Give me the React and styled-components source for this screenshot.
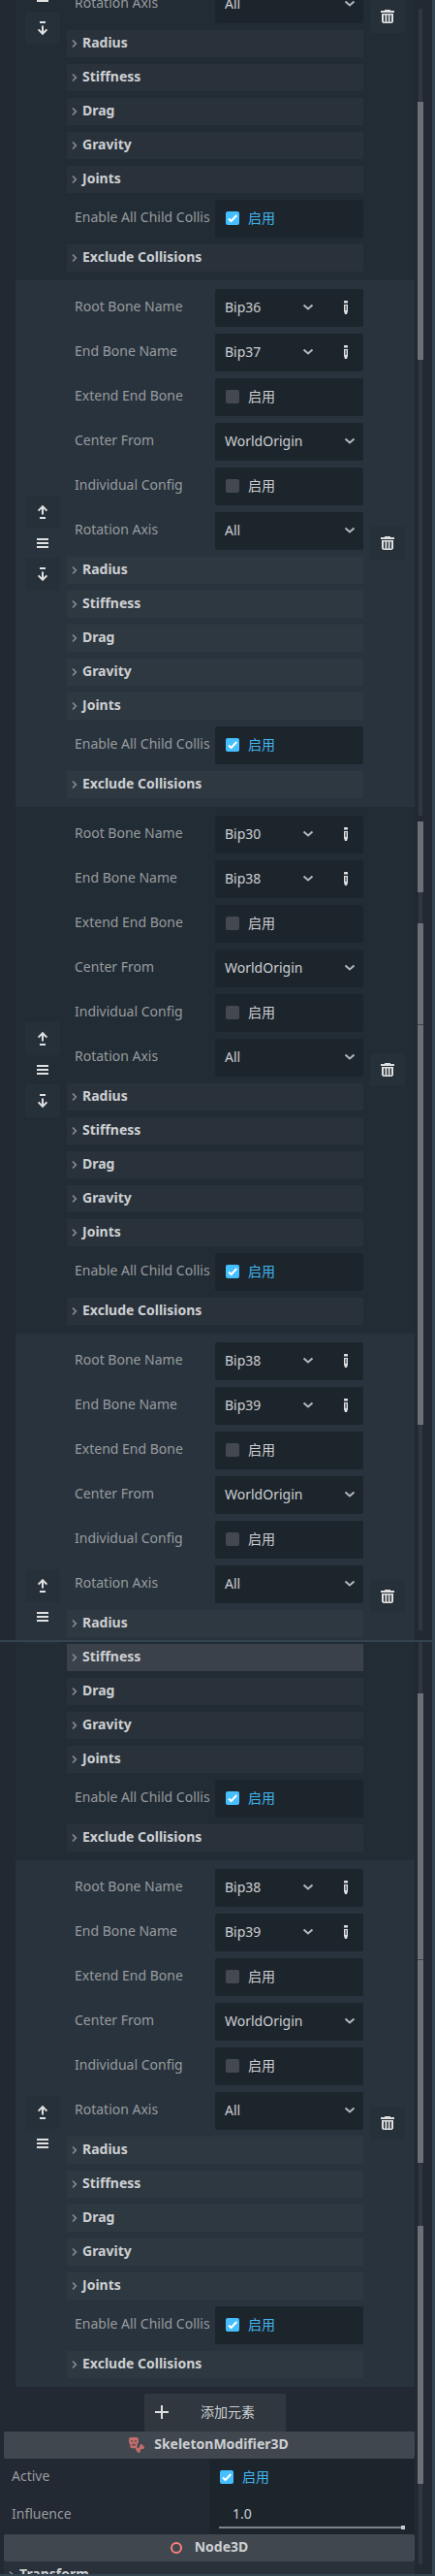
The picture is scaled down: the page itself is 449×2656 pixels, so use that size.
import React from "react"
import styled, { createGlobalStyle } from "styled-components"

const UPPER_SCROLL = [
   ["gap", 9],
   ["track", 96],
   ["thumb", 266],
   ["track", 470],
   ["gap", 6],
   ["thumb", 73],
   ["track", 32],
   ["thumb", 104],
   ["notch", 1],
   ["thumb", 412],
   ["track", 212],
]

const LOWER_SCROLL = [
   ["track", 53],
   ["thumb", 274],
   ["notch", 1],
   ["thumb", 209],
   ["track", 65],
   ["thumb", 266],
   ["track", 83],
]

const ChevronDown = () => (
   <svg width="12" height="8" viewBox="0 0 12 8" fill="none">
      <path d="M1.5 1.5L6 5.5L10.5 1.5" stroke="#b4b7ba" strokeWidth="2" />
   </svg>
)

const ChevronRight = () => (
   <svg width="6" height="10" viewBox="0 0 6 10" fill="none">
      <path d="M1 1.5L4.3 5L1 8.5" stroke="#84898f" strokeWidth="1.8" />
   </svg>
)

const PencilIcon = () => (
   <svg width="4" height="14" viewBox="0 0 4 14">
      <path
         fill="#e0e0e0"
         fillRule="evenodd"
         d="M0.6 0h2.8l0.6 0.6V2.6H0V0.6zM0 4h4v7L3 14H1L0 11zM1.5 5v5h1V5z"
      />
   </svg>
)

const MoveUpIcon = () => (
   <svg width="12" height="16" viewBox="0 0 12 16" fill="none">
      <path d="M6 10.6V2.2M1.6 6.6L6 2.2L10.4 6.6" stroke="#e0e0e0" strokeWidth="2" />
      <path d="M3 14H9" stroke="#e0e0e0" strokeWidth="2" />
   </svg>
)

const MoveDownIcon = () => (
   <svg width="12" height="16" viewBox="0 0 12 16" fill="none">
      <path d="M6 5.4V13.8M1.6 9.4L6 13.8L10.4 9.4" stroke="#e0e0e0" strokeWidth="2" />
      <path d="M3 2H9" stroke="#e0e0e0" strokeWidth="2" />
   </svg>
)

const HandleIcon = () => (
   <svg width="12" height="10" viewBox="0 0 12 10">
      <path d="M0 0h12v2H0zM0 4h12v2H0zM0 8h12v2H0z" fill="#e0e0e0" />
   </svg>
)

const TrashIcon = () => (
   <svg width="14" height="14" viewBox="0 0 14 14">
      <path
         fill="#e0e0e0"
         fillRule="evenodd"
         d="M4 0h6v1h4v2H0V1h4zM1 4h12v8.5L11.5 14h-9L1 12.5zM3 5.5v7h1.5v-7zM6.3 5.5v7h1.5v-7zM9.5 5.5v7H11v-7z"
      />
   </svg>
)

const PlusIcon = () => (
   <svg width="14" height="14" viewBox="0 0 14 14">
      <path d="M6 0h2v6h6v2H8v6H6V8H0V6h6z" fill="#e0e0e0" />
   </svg>
)

const SkeletonIcon = () => (
   <svg width="16" height="16" viewBox="0 0 16 16" fill="#c46c6e">
      <path
         fillRule="evenodd"
         d="M2.2 0h5.6Q10 0 10 2.2v2.600Q10 6.500 8.700 7v2.300q0 1.900-1.900 1.900H3.200q-1.900 0-1.900-1.900V7Q0 6.500 0 4.800V2.200Q0 0 2.200 0zM2.200 3v1.600h1.600V3zM6.200 3v1.600h1.600V3zM4.600 5.200v0.900h0.900v-0.900zM3 7.300v1.200h4V7.300z"
      />
      <path d="M9.200 13.400L14 9.400" stroke="#c46c6e" strokeWidth="2.8" />
      <circle cx="8.700" cy="12.300" r="1.700" />
      <circle cx="10.200" cy="14.200" r="1.700" />
      <circle cx="12.900" cy="8.700" r="1.700" />
      <circle cx="14.300" cy="10.500" r="1.700" />
   </svg>
)

const NodeIcon = () => (
   <svg width="12" height="12" viewBox="0 0 12 12">
      <circle cx="6" cy="6" r="5" fill="none" stroke="#fc7f7f" strokeWidth="2" />
   </svg>
)

const CheckField = ({ checked, flush }) => (
   <Field $flush={flush}>
      <CheckBox $checked={checked}>
         {checked && (
            <svg width="14" height="14" viewBox="0 0 14 14" fill="none">
               <path d="M3 7.5L5.6 10L11.3 4" stroke="#fff" strokeWidth="2" />
            </svg>
         )}
      </CheckBox>
      <CheckText $checked={checked}>启用</CheckText>
   </Field>
)

const BoneField = ({ value }) => (
   <Field>
      <span>{value}</span>
      <BoneActions>
         <ChevronDown />
         <PencilIcon />
      </BoneActions>
   </Field>
)

const SelectField = ({ value }) => (
   <Field>
      <span>{value}</span>
      <ChevronDown />
   </Field>
)

const FIELDS = {
   bone: BoneField,
   check: CheckField,
   select: SelectField,
}

const getItems = (root, end) => [
   { label: "Root Bone Name", type: "bone", value: root },
   { label: "End Bone Name", type: "bone", value: end },
   { label: "Extend End Bone", type: "check" },
   { label: "Center From", type: "select", value: "WorldOrigin" },
   { label: "Individual Config", type: "check" },
   { label: "Rotation Axis", type: "select", value: "All" },
   { label: "Radius", type: "group" },
   { label: "Stiffness", type: "group" },
   { label: "Drag", type: "group" },
   { label: "Gravity", type: "group" },
   { label: "Joints", type: "group" },
   { label: "Enable All Child Collis", type: "check", checked: true },
   { label: "Exclude Collisions", type: "group" },
]

const Item = ({ item, light, hovered }) => {
   if (item.type === "group") {
      return (
         <GroupBar $light={light} $hovered={hovered}>
            <ChevronRight />
            <span>{item.label}</span>
         </GroupBar>
      )
   }

   const ItemField = FIELDS[item.type]
   return (
      <PropertyRow>
         <Label>{item.label}</Label>
         <ItemField value={item.value} checked={item.checked} />
      </PropertyRow>
   )
}

// from / to limit the list to the items that are scrolled into view
const Joint = ({
   root,
   end,
   light,
   last,
   offset = 0,
   controlsShift = 0,
   hovered,
   from = 0,
   to,
}) => (
   <JointPanel $light={light} $offset={offset}>
      <Controls $shift={controlsShift}>
         <ToolButton>
            <MoveUpIcon />
         </ToolButton>
         <Handle>
            <HandleIcon />
         </Handle>
         {!last && (
            <ToolButton>
               <MoveDownIcon />
            </ToolButton>
         )}
      </Controls>
      <Properties $fromTop={Boolean(to)}>
         {getItems(root, end)
            .slice(from, to)
            .map((item) => (
               <Item
                  key={item.label}
                  item={item}
                  light={light}
                  hovered={hovered === item.label}
               />
            ))}
      </Properties>
      <ToolButton>
         <TrashIcon />
      </ToolButton>
   </JointPanel>
)

const ScrollBar = ({ segments }) => (
   <ScrollColumn>
      {segments.map(([kind, size], index) => (
         <Segment key={index} $kind={kind} $size={size} />
      ))}
   </ScrollColumn>
)

const App = () => (
   <Inspector>
      <GlobalStyle />
      <View $height={1691}>
         <Content>
            <Joint from={5} offset={-254} controlsShift={-40} />
            <Joint root="Bip36" end="Bip37" light />
            <Joint root="Bip30" end="Bip38" />
            <Joint root="Bip38" end="Bip39" light last to={7} />
         </Content>
         <ScrollBar segments={UPPER_SCROLL} />
      </View>
      <Divider />
      <View $height={961}>
         <Content>
            <Joint from={7} offset={-318} hovered="Stiffness" />
            <Joint root="Bip38" end="Bip39" light last />
            <AddButton>
               <PlusIcon />
               <span>添加元素</span>
            </AddButton>
            <SectionHeader $gap={10} $shift={1}>
               <SkeletonIcon />
               <span>SkeletonModifier3D</span>
            </SectionHeader>
            <WideRow>
               <Label>Active</Label>
               <CheckField checked flush />
            </WideRow>
            <WideRow>
               <Label>Influence</Label>
               <SliderField>
                  <SliderValue>1.0</SliderValue>
                  <Slider />
               </SliderField>
            </WideRow>
            <SectionHeader $gap={13}>
               <NodeIcon />
               <span>Node3D</span>
            </SectionHeader>
            <BottomGroup>
               <ChevronRight />
               <span>Transform</span>
            </BottomGroup>
         </Content>
         <ScrollBar segments={LOWER_SCROLL} />
      </View>
      <Divider />
   </Inspector>
)

export default App

const GlobalStyle = createGlobalStyle`
   * {
      box-sizing: border-box;
   }
   body {
      margin: 0;
      background: #222932;
   }
   svg {
      display: block;
      flex-shrink: 0;
   }
`

const Inspector = styled.div`
   width: 449px;
   height: 2656px;
   overflow: hidden;
   border-right: 3px solid #33434f;
   background: #222932;
   color: #cdcfd2;
   font-family: "Noto Sans", "Noto Sans CJK SC", sans-serif;
   font-size: 14px;
   line-height: 20px;
`

const View = styled.div`
   display: flex;
   height: ${({ $height }) => $height}px;
   overflow: hidden;
`

const Divider = styled.div`
   height: 2px;
   background: #33434f;
`

const Content = styled.div`
   width: 428px;
   flex-shrink: 0;
`

const JointPanel = styled.div`
   display: flex;
   align-items: center;
   gap: 7px;
   height: 543px;
   margin: ${({ $offset }) => $offset}px 0 0 16px;
   padding: 8px 10px 9px;
   background: ${({ $light }) => ($light ? "#29333d" : "#222c34")};
`

const Controls = styled.div`
   display: flex;
   flex-direction: column;
   gap: 7px;
   margin-top: ${({ $shift }) => $shift}px;
`

const ToolButton = styled.div`
   display: flex;
   align-items: center;
   justify-content: center;
   flex-shrink: 0;
   width: 36px;
   height: 34px;
   border-radius: 2px;
   background: #263039;
`

const Handle = styled.div`
   display: flex;
   align-items: center;
   justify-content: center;
   height: 16px;
`

const Properties = styled.div`
   display: flex;
   flex-direction: column;
   align-self: ${({ $fromTop }) => ($fromTop ? "flex-start" : "flex-end")};
   gap: 7px;
   width: 306px;
   padding-top: ${({ $fromTop }) => ($fromTop ? 1 : 0)}px;
   flex-shrink: 0;
`

const PropertyRow = styled.div`
   display: grid;
   grid-template-columns: 145px 153px;
   padding-left: 8px;
   height: 39px;
`

const Label = styled.div`
   padding-top: 8px;
   white-space: nowrap;
   color: #989b9f;
`

const Field = styled.div`
   display: flex;
   align-items: center;
   justify-content: space-between;
   padding: 0 8px 1px 10px;
   border-radius: ${({ $flush }) => ($flush ? 0 : 2)}px;
   background: #1d252c;
`

const BoneActions = styled.div`
   display: flex;
   align-items: center;
   gap: 31px;
   padding-right: 8px;
`

const CheckBox = styled.span`
   width: 14px;
   height: 14px;
   margin-left: 1px;
   flex-shrink: 0;
   border-radius: 2px;
   background: ${({ $checked }) => ($checked ? "#45bfff" : "#43494f")};
`

const CheckText = styled.span`
   flex: 1;
   padding-left: 9px;
   color: ${({ $checked }) => ($checked ? "#41b5f2" : "#cdcfd2")};
`

const GroupBar = styled.div`
   display: flex;
   align-items: center;
   gap: 5px;
   height: 28px;
   padding-left: 5px;
   font-weight: 700;
   background: ${({ $light, $hovered }) =>
      $hovered ? "#3b414a" : $light ? "#2e3840" : "#29323b"};

   span {
      padding-bottom: 2px;
   }
`

const BottomGroup = styled(GroupBar)`
   margin-left: 4px;
   background: #29303a;
`

const AddButton = styled.div`
   display: flex;
   align-items: center;
   gap: 33px;
   width: 146px;
   height: 39px;
   margin: 7px 0 0 149px;
   padding: 0 0 1px 11px;
   border-radius: 2px;
   background: #30373f;
`

const SectionHeader = styled.div`
   display: flex;
   align-items: center;
   justify-content: center;
   gap: ${({ $gap }) => $gap}px;
   height: 28px;
   margin-left: 4px;
   padding-right: ${({ $shift = 0 }) => $shift}px;
   border-radius: 2px;
   font-weight: 700;
   background: #40474f;

   span {
      padding-bottom: 2px;
   }
`

const WideRow = styled.div`
   display: grid;
   grid-template-columns: 204px 212px;
   height: 39px;
   padding-left: 12px;
`

const SliderField = styled.div`
   display: flex;
   flex-direction: column;
   padding: 8px 10px 0;
   background: #1d252c;
`

const SliderValue = styled.span`
   padding-left: 14px;
`

const Slider = styled.div`
   display: flex;
   align-items: center;
   justify-content: flex-end;
   height: 4px;
   margin-top: 2px;
   background: linear-gradient(#7c838b, #7c838b) center / 100% 2px no-repeat;

   &::after {
      content: "";
      width: 4px;
      height: 4px;
      background: #c8cacc;
   }
`

const ScrollColumn = styled.div`
   display: flex;
   flex-direction: column;
   align-items: center;
   width: 12px;
`

const SEGMENT_COLORS = {
   gap: "transparent",
   track: "#31373f",
   thumb: "#6d7177",
   notch: "#3f454d",
}

const Segment = styled.div`
   flex-shrink: 0;
   width: ${({ $kind }) => ($kind === "track" ? 4 : 6)}px;
   height: ${({ $size }) => $size}px;
   background: ${({ $kind }) => SEGMENT_COLORS[$kind]};
`
